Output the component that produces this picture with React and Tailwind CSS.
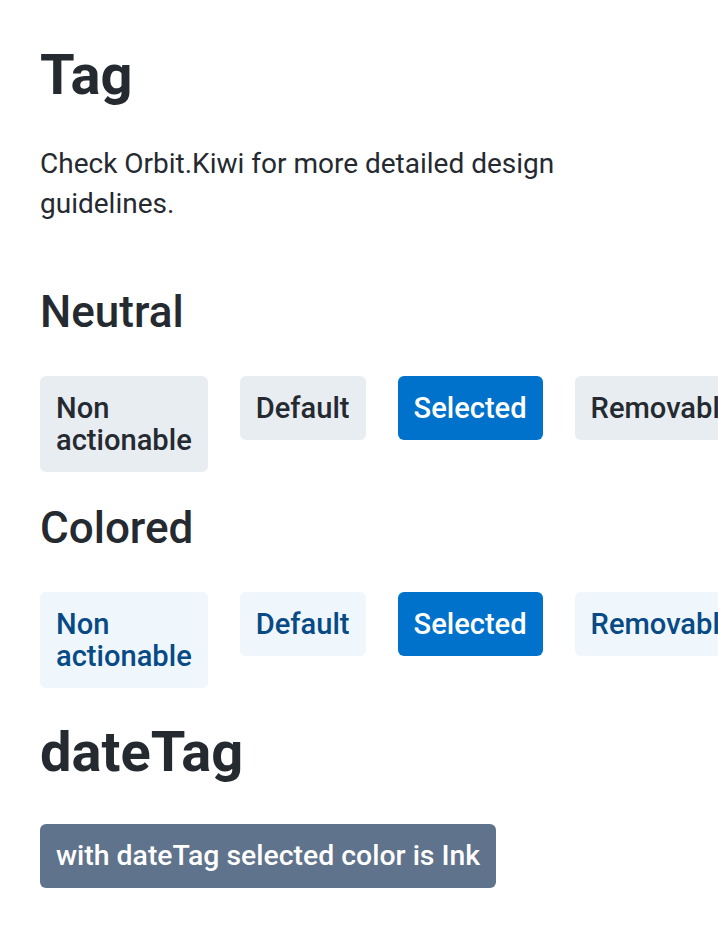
import { X } from 'lucide-react';

const neutral = {
  base: 'bg-[#e8edf1] text-[#252a31]',
  selected: 'bg-[#0172cb] text-white',
};

const colored = {
  base: 'bg-[#eff7fd] text-[#084a85]',
  selected: 'bg-[#0172cb] text-white',
};

const Tag = ({ children, tone, selected, removable }) => (
  <div
    className={`flex items-center gap-2 px-4 py-4 rounded-md text-[29.1px] leading-8 font-medium ${
      selected ? tone.selected : tone.base
    }`}
  >
    <span>{children}</span>
    {removable && <X size={24} strokeWidth={2.5} className="shrink-0" />}
  </div>
);

const TagRow = ({ tone }) => (
  <div className="flex items-start gap-8 mt-10">
    <Tag tone={tone}>Non actionable</Tag>
    <Tag tone={tone}>Default</Tag>
    <Tag tone={tone} selected>Selected</Tag>
    <Tag tone={tone} removable>Removable</Tag>
  </div>
);

export default function App() {
  return (
    <div className="h-[928px] w-[718px] overflow-hidden bg-white text-[#252a31] font-['Roboto',sans-serif]">
      <div className="pl-10 pt-[43px]">
        <h1 className="text-[56px] leading-[64px] font-bold">Tag</h1>
        <p className="mt-[37px] text-[28px] leading-10 max-w-[620px]">
          Check Orbit.Kiwi for more detailed design guidelines.
        </p>

        <h2 className="mt-16 text-[44px] leading-[48px] font-medium">Neutral</h2>
        <TagRow tone={neutral} />

        <h2 className="mt-8 text-[44px] leading-[48px] font-medium">Colored</h2>
        <TagRow tone={colored} />

        <h1 className="mt-8 text-[56px] leading-[64px] font-bold">dateTag</h1>
        <div className="flex mt-10">
          <div className="px-4 py-4 rounded-md text-[28.4px] leading-8 font-medium bg-[#5f738c] text-white">
            with dateTag selected color is Ink
          </div>
        </div>
      </div>
    </div>
  );
}
